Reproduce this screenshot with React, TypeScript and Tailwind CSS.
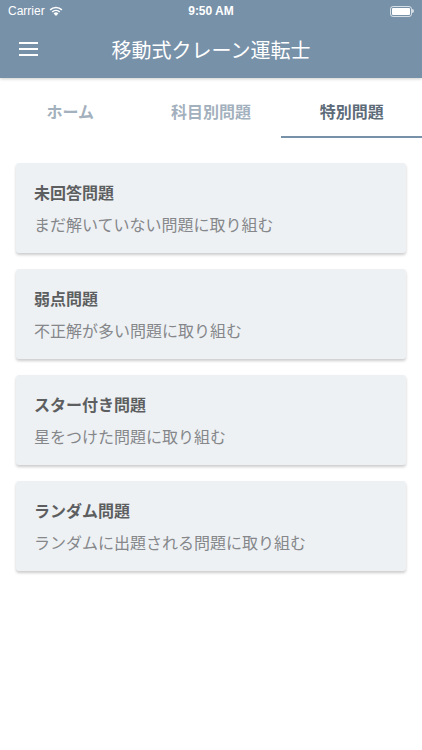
import React from 'react';

const font = { fontFamily: '"Noto Sans CJK JP", "Liberation Sans", sans-serif' };

const items = [
  { title: '未回答問題', desc: 'まだ解いていない問題に取り組む' },
  { title: '弱点問題', desc: '不正解が多い問題に取り組む' },
  { title: 'スター付き問題', desc: '星をつけた問題に取り組む' },
  { title: 'ランダム問題', desc: 'ランダムに出題される問題に取り組む' },
];

const tabs = ['ホーム', '科目別問題', '特別問題'];

export default function App() {
  return (
    <div className="w-[422px] h-[750px] bg-white overflow-hidden" style={font}>
      {/* status bar + nav */}
      <div className="bg-[#7791a9] text-white shadow-[0_1px_3px_rgba(0,0,0,0.2)] relative z-10">
        <div className="h-[22px] flex items-center justify-between px-[8px] text-[12px]">
          <div className="flex items-center gap-[4px] w-[100px]" style={{ fontFamily: '"Liberation Sans", sans-serif' }}>
            <span>Carrier</span>
            <svg width="14" height="10" viewBox="0 0 14 10" fill="white">
              <path d="M7 10 L4.6 7.4 A3.4 3.4 0 0 1 9.4 7.4 Z" />
              <path d="M2.7 5.4 A6.2 6.2 0 0 1 11.3 5.4 L10.2 6.5 A4.7 4.7 0 0 0 3.8 6.5 Z" />
              <path d="M0.6 3.3 A9.2 9.2 0 0 1 13.4 3.3 L12.3 4.4 A7.7 7.7 0 0 0 1.7 4.4 Z" />
            </svg>
          </div>
          <span className="font-bold" style={{ fontFamily: '"Liberation Sans", sans-serif' }}>9:50 AM</span>
          <div className="w-[100px] flex justify-end">
            <div className="flex items-center">
              <div className="w-[22px] h-[11px] border border-white/70 rounded-[3px] p-[1px]">
                <div className="w-full h-full bg-white rounded-[1px]" />
              </div>
              <div className="w-[1.5px] h-[4px] bg-white/70 rounded-r-sm" />
            </div>
          </div>
        </div>
        <div className="h-[56px] flex items-center relative">
          <div className="absolute left-[19px] top-[20px] flex flex-col gap-[4px]">
            <div className="w-[19px] h-[2px] bg-white" />
            <div className="w-[19px] h-[2px] bg-white" />
            <div className="w-[19px] h-[2px] bg-white" />
          </div>
          <div className="flex-1 text-center text-[20px]">移動式クレーン運転士</div>
        </div>
      </div>

      {/* tabs */}
      <div className="h-[60px] flex">
        {tabs.map((t, i) => (
          <div key={t} className="flex-1 flex flex-col">
            <div
              className={`flex-1 flex items-center justify-center text-[16px] font-bold pt-[8px] ${
                i === 2 ? 'text-[#5d6b79]' : 'text-[#a3b0bd]'
              }`}
            >
              {t}
            </div>
            <div className={`h-[2px] ${i === 2 ? 'bg-[#7791a9]' : 'bg-transparent'}`} />
          </div>
        ))}
      </div>

      {/* cards */}
      <div className="px-[16px] pt-[25px] flex flex-col gap-[16px]">
        {items.map((it) => (
          <div
            key={it.title}
            className="h-[90px] bg-[#eef1f4] rounded-[3px] shadow-[0_2px_3px_rgba(0,0,0,0.2)] px-[18px] pt-[17px]"
          >
            <div className="text-[16px] font-bold text-[#5c5e60] leading-[24px]">{it.title}</div>
            <div className="text-[16px] text-[#85878a] leading-[24px] mt-[8px]">{it.desc}</div>
          </div>
        ))}
      </div>
    </div>
  );
}
